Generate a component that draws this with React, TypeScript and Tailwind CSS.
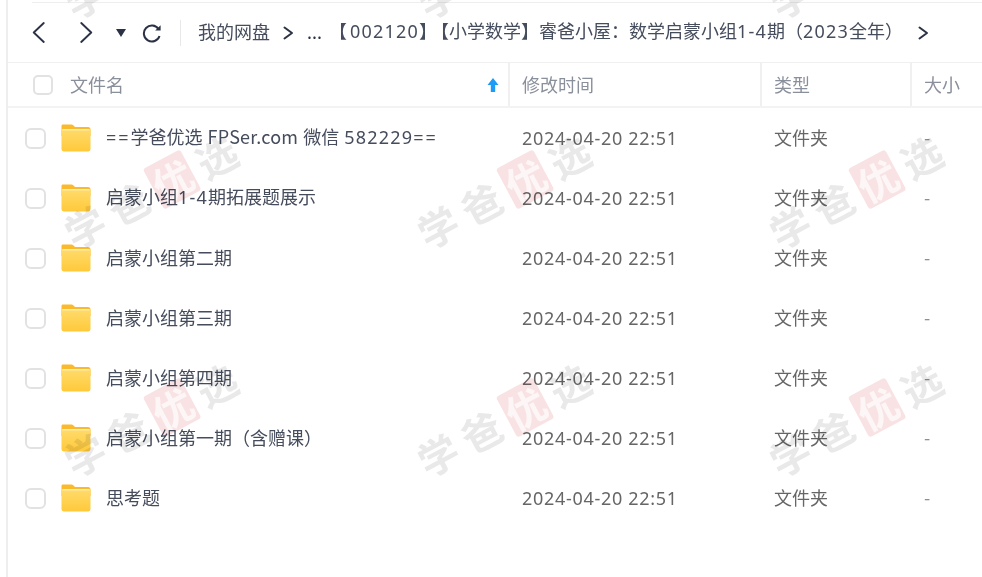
const font = { fontFamily: '"Noto Sans CJK SC", "Noto Sans", sans-serif' };
const latin = { fontFamily: '"Noto Sans", sans-serif' };

const rows = [
  "==学爸优选 FPSer.com 微信 582229==",
  "启蒙小组1-4期拓展题展示",
  "启蒙小组第二期",
  "启蒙小组第三期",
  "启蒙小组第四期",
  "启蒙小组第一期（含赠课）",
  "思考题",
];

function Mixed({ text }: { text: string }) {
  return (
    <>
      {text.split(/(==|[0-9\-]+|FPSer\.com| )/).map((part, i) => {
        if (part === "==") return <span key={i} className="tracking-[2px]" style={latin}>{part}</span>;
        if (part === " ") return <span key={i} className="inline-block w-[5px]" />;
        if (part === "FPSer.com") return <span key={i} className="tracking-[0.2px]">{part}</span>;
        if (/^[0-9\-]+$/.test(part)) return <span key={i} className="tracking-[1.2px]" style={latin}>{part}</span>;
        return <span key={i}>{part}</span>;
      })}
    </>
  );
}

function Chevron({ dir, className }: { dir: "l" | "r"; className: string }) {
  return (
    <svg viewBox="0 0 12 20" className={className} fill="none" stroke="#2b3245" strokeWidth="1.8" strokeLinecap="round" strokeLinejoin="round">
      <path d={dir === "l" ? "M11 1 L1.5 10 L11 19" : "M1 1 L10.5 10 L1 19"} />
    </svg>
  );
}

function SmallChevron({ className }: { className: string }) {
  return (
    <svg viewBox="0 0 10 14" className={className} fill="none" stroke="#2b3245" strokeWidth="2" strokeLinejoin="round" strokeLinecap="round">
      <path d="M1 1.5 L8.5 7 L1 12.5" />
    </svg>
  );
}

function Folder() {
  return (
    <svg viewBox="0 0 30 28" className="w-[30px] h-[28px] shrink-0">
      <path d="M2 0.5 H10.5 C12 0.5 12.5 1.5 13.5 2.5 L14 3 H27 C28.6 3 29.5 4 29.5 5.5 V12 H0.5 V2 C0.5 1 1 0.5 2 0.5 Z" fill="#fbb92c" />
      <path d="M0.5 7 C0.5 6 1 5.5 2 5.5 H28 C29 5.5 29.5 6 29.5 7 V25 C29.5 26.6 28.6 27.5 27 27.5 H3 C1.4 27.5 0.5 26.6 0.5 25 Z" fill="url(#fg)" />
      <rect x="1.2" y="5" width="27.6" height="1.4" rx="0.7" fill="#ffeeb0" />
      <defs>
        <linearGradient id="fg" x1="0" y1="0" x2="0" y2="1">
          <stop offset="0" stopColor="#ffdb6b" />
          <stop offset="1" stopColor="#ffc93a" />
        </linearGradient>
      </defs>
    </svg>
  );
}

function Mark({ x, y }: { x: number; y: number }) {
  return (
    <div
      className="absolute flex items-center gap-[9px] text-[40px] leading-none font-bold text-[#e9e9e9] -rotate-[28deg] whitespace-nowrap"
      style={{ left: x - 116, top: y - 7, fontFamily: '"Noto Sans CJK SC", sans-serif' }}
    >
      <span>学</span>
      <span>爸</span>
      <span className="w-[42px] h-[46px] bg-[#f9e2e4] text-[#fdf6f6] rounded-[3px] flex items-center justify-center">优</span>
      <span>选</span>
    </div>
  );
}

export default function App() {
  const marks: [number, number][] = [];
  for (const y of [-55, 175, 403, 633]) for (const x of [172, 525, 877]) marks.push([x, y]);
  return (
    <div className="relative w-[982px] h-[577px] overflow-hidden bg-white" style={font}>
      <div className="ml-[6px] h-[577px] border-l-2 border-l-[#eeeeee] pt-[2px]">
        <div className="ml-[24px] h-px bg-[#eeeeee]" />
        <div className="h-[60px] border-b border-[#f0f0f0] flex items-center text-[18px] text-[#454c5c]">
          <Chevron dir="l" className="ml-[24px] w-[13px] h-[21px]" />
          <Chevron dir="r" className="ml-[35px] w-[13px] h-[21px]" />
          <svg viewBox="0 0 10 8" className="ml-[23px] w-[10px] h-[8px]"><path d="M0 0 H10 L5 8 Z" fill="#2b3245" /></svg>
          <svg viewBox="0 0 20 20" className="ml-[16px] w-[20px] h-[20px]" fill="none" stroke="#2b3245" strokeWidth="2">
            <path d="M16.5 6 A8 8 0 1 0 17.5 13" />
            <path d="M18.6 2.2 V7.6 H13.2 Z" fill="#2b3245" stroke="none" />
          </svg>
          <div className="ml-[18px] w-px h-[26px] bg-[#e8e8e8]" />
          <span className="ml-[17px] -mt-[3px]">我的网盘</span>
          <SmallChevron className="ml-[13px] w-[11px] h-[14px]" />
          <span className="ml-[13px] w-[22px] -mt-[3px] text-[#2b3245]">...</span>
          <span className="whitespace-nowrap -mt-[3px]">
            <span>【</span>
            <span className="ml-[3px] tracking-[1.2px]" style={latin}>002120</span>
            <span>】</span>
            <span className="ml-[3px]">【</span>
            <Mixed text="小学数学】睿爸小屋：数学启蒙小组1-4期（2023全年）" />
          </span>
          <SmallChevron className="ml-[15px] w-[11px] h-[14px]" />
        </div>
        <div className="h-[45px] border-b-2 border-[#f3f3f3] flex text-[18px] text-[#8a8f9c]">
          <div className="w-[502px] border-r-2 border-[#f0f0f0] flex items-center">
            <div className="ml-[25px] w-[20px] h-[20px] rounded-[5px] border-2 border-[#e2e2e2]" />
            <span className="ml-[17px]">文件名</span>
            <svg viewBox="0 0 12 14" className="ml-auto mr-[9px] w-[12px] h-[14px]"><path d="M6 0 L11.5 7 H8.2 V14 H3.8 V7 H0.5 Z" fill="#1e9bf5" /></svg>
          </div>
          <div className="w-[252px] border-r-2 border-[#f0f0f0] flex items-center pl-[12px]">修改时间</div>
          <div className="w-[150px] border-r-2 border-[#f0f0f0] flex items-center pl-[12px]">类型</div>
          <div className="flex-1 flex items-center pl-[12px]">大小</div>
        </div>
        {rows.map((r, i) => (
          <div key={i} className="h-[60px] flex items-center text-[18px]">
            <div className="w-[502px] flex items-center">
              <div className="ml-[17px] w-[21px] h-[21px] rounded-[6px] border-2 border-[#e2e2e2]" />
              <div className="ml-[15px]"><Folder /></div>
              <span className="ml-[15px] -mt-[2px] text-[#454c5c] whitespace-nowrap"><Mixed text={r} /></span>
            </div>
            <div className="w-[252px] pl-[12px] text-[#666666] whitespace-nowrap tracking-[0.7px]" style={latin}>2024-04-20 22:51</div>
            <div className="w-[150px] pl-[12px] -mt-[2px] text-[#666666]">文件夹</div>
            <div className="pl-[12px] -mt-[2px] text-[#8a8f9c]">-</div>
          </div>
        ))}
      </div>
      <div className="absolute inset-0 pointer-events-none mix-blend-multiply">
        {marks.map(([x, y], i) => <Mark key={i} x={x} y={y} />)}
      </div>
    </div>
  );
}
